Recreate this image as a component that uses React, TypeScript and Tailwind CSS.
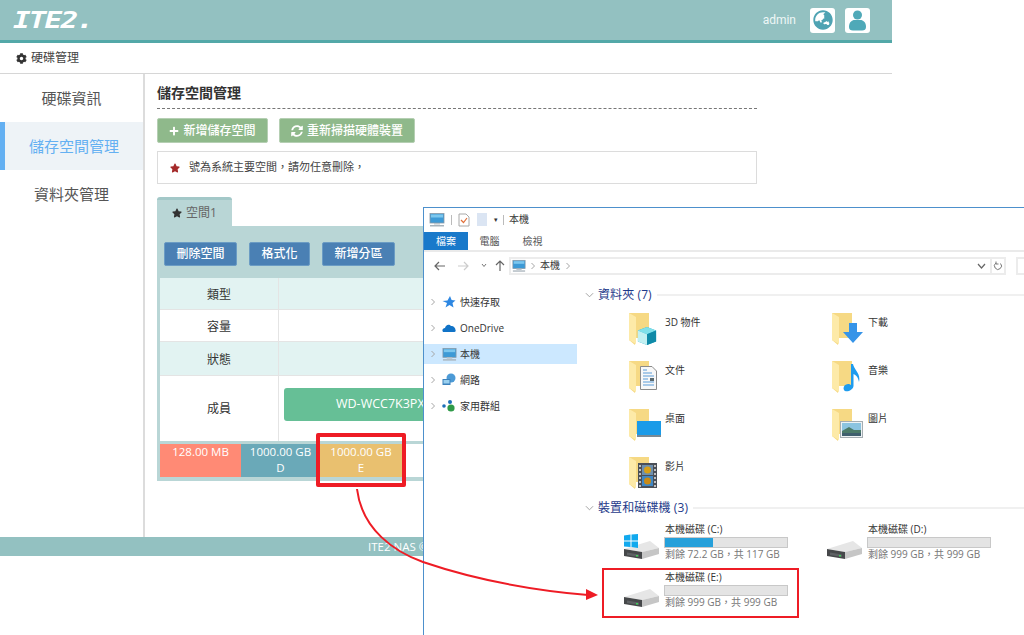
import { FaCog, FaPlus, FaSyncAlt, FaStar, FaGlobeAsia } from "react-icons/fa";
import type { ReactNode } from "react";

const cjk = "font-['Open_Sans','Noto_Sans_CJK_TC',sans-serif]";

const sideItems = [
  { name: "硬碟資訊", active: false },
  { name: "儲存空間管理", active: true },
  { name: "資料夾管理", active: false },
];

const rows = [
  { name: "類型", h: "h-[32px]", bg: "bg-[#e2f3f2]" },
  { name: "容量", h: "h-[32px]", bg: "bg-white" },
  { name: "狀態", h: "h-[34px]", bg: "bg-[#e2f3f2]" },
];

function BlueBtn({ label, w }: { label: string; w: string }) {
  return (
    <div className={`${w} h-[24px] flex items-center justify-center rounded-[2px] bg-[#4a80b4] border border-[#6b9cc4] text-white text-[12px] font-medium`}>
      {label}
    </div>
  );
}

function GreenBtn({ icon, label, w }: { icon: ReactNode; label: string; w: string }) {
  return (
    <div className={`${w} h-[25px] flex items-center justify-center gap-[4px] rounded-[2px] bg-[#8fb98b] border border-[#b5cfb3] text-white text-[12px] font-medium`}>
      {icon}
      {label}
    </div>
  );
}

function PcIcon({ size = 16 }: { size?: number }) {
  return (
    <svg width={size} height={size} viewBox="0 0 16 16" className="shrink-0">
      <rect x="1" y="1.5" width="14" height="9.5" fill="#3d9ad6" stroke="#8a9aa6" strokeWidth="0.8" />
      <rect x="2" y="2.5" width="12" height="3" fill="#7cc7ee" />
      <rect x="5" y="11" width="6" height="1.5" fill="#b9c3ca" />
      <rect x="1" y="13" width="14" height="1.5" fill="#a8b3bb" />
    </svg>
  );
}

function Folder({ overlay }: { overlay?: ReactNode }) {
  return (
    <div className="relative w-[36px] h-[34px] shrink-0">
      <svg width="22" height="34" viewBox="0 0 22 34" className="absolute left-0 top-0">
        <path d="M0 1 H20 V26 H7 L6 33 L0 28 Z" fill="#f6d984" />
        <path d="M0 1 L7 5 V32 L0 28 Z" fill="#fdeaa8" />
      </svg>
      {overlay}
    </div>
  );
}

function DriveIcon({ win }: { win?: boolean }) {
  return (
    <svg width="35" height="26" viewBox="0 0 35 26" className="shrink-0">
      <path d="M0 15 L26 7 L35 14 L18 18 Z" fill="#e6e6e6" />
      <path d="M0 15 L18 18 V25 L0 22 Z" fill="#46484a" />
      <path d="M3 18.5 L15 20.5 V23 L3 21 Z" fill="#5e6164" />
      <path d="M18 18 L35 14 V20 L18 25 Z" fill="#c6c6c6" />
      <rect x="12" y="21" width="2" height="1.5" fill="#3ed25a" />
      {win && (
        <g fill="#11a9ee">
          <path d="M0 1.5 L6.5 0.5 V6.5 H0 Z" />
          <path d="M7.5 0.5 L14 0 V6.5 H7.5 Z" />
          <path d="M0 7.5 H6.5 V13 L0 12.5 Z" />
          <path d="M7.5 7.5 H14 V14 L7.5 13 Z" />
        </g>
      )}
    </svg>
  );
}

const folders: { name: string; overlay: ReactNode }[] = [
  {
    name: "3D 物件",
    overlay: (
      <svg width="20" height="20" viewBox="0 0 22 22" className="absolute left-[8px] top-[14px]">
        <path d="M11 1 L21 5 V17 L11 21 L1 17 V5 Z" fill="#1fa9c9" />
        <path d="M11 1 L21 5 L11 9 L1 5 Z" fill="#7fe0ea" />
        <path d="M1 5 L11 9 V21 L1 17 Z" fill="#c2f0f2" />
        <path d="M11 9 L21 5 V17 L11 21 Z" fill="#0f8aa8" />
      </svg>
    ),
  },
  {
    name: "下載",
    overlay: (
      <svg width="20" height="20" viewBox="0 0 20 20" className="absolute left-[11px] top-[11px]">
        <path d="M6 0 H14 V9 H20 L10 20 L0 9 H6 Z" fill="#3694e8" />
      </svg>
    ),
  },
  {
    name: "文件",
    overlay: (
      <svg width="17" height="24" viewBox="0 0 17 24" className="absolute left-[11px] top-[6px]">
        <path d="M0.5 0.5 H12 L16.5 5 V23.5 H0.5 Z" fill="#f8f8f8" stroke="#8b8b8b" />
        <path d="M3 4 H7 M3 7 H12 M3 10 H14 M3 13 H8 M3 16 H14 M3 19 H14" stroke="#5a9bd8" strokeWidth="1.2" />
        <rect x="10" y="12" width="4" height="3" fill="#5c6a70" />
      </svg>
    ),
  },
  {
    name: "音樂",
    overlay: (
      <svg width="18" height="28" viewBox="0 0 18 28" className="absolute left-[11px] top-[4px]">
        <path d="M8 0 H10 C11 6 18 9 16 18 C15 13 13 11 10.5 10 V22 C10 26 5 28 2 27 C-1 25 1 20 5 20 C6 20 7.5 20.5 8 21 Z" fill="#1e9cee" />
      </svg>
    ),
  },
  {
    name: "桌面",
    overlay: (
      <svg width="24" height="17" viewBox="0 0 24 17" className="absolute left-[8px] top-[13px]">
        <rect x="0" y="0" width="24" height="14" fill="#1b9be8" />
        <rect x="0" y="14" width="24" height="2" fill="#7a8a94" />
      </svg>
    ),
  },
  {
    name: "圖片",
    overlay: (
      <svg width="23" height="17" viewBox="0 0 23 17" className="absolute left-[8px] top-[13px]">
        <rect x="0.5" y="0.5" width="22" height="16" fill="#eef2f4" stroke="#a5adb2" />
        <rect x="2" y="2" width="19" height="13" fill="#8cc4e0" />
        <path d="M2 10 L9 6 L14 9 L21 9 V15 H2 Z" fill="#4b7a68" />
        <rect x="2" y="12" width="19" height="3" fill="#3f5f6e" />
      </svg>
    ),
  },
  {
    name: "影片",
    overlay: (
      <svg width="19" height="25" viewBox="0 0 19 25" className="absolute left-[9px] top-[7px]">
        <rect x="0" y="0" width="19" height="25" fill="#4a4f57" />
        <rect x="4" y="2" width="11" height="10" fill="#6d8fae" />
        <rect x="4" y="13" width="11" height="10" fill="#3f87c4" />
        <circle cx="9.5" cy="7" r="3.5" fill="#d8a018" />
        <circle cx="9.5" cy="18" r="3.5" fill="#c98a16" />
        <path d="M1 3 H3 M1 7 H3 M1 11 H3 M1 15 H3 M1 19 H3 M1 23 H3 M16 3 H18 M16 7 H18 M16 11 H18 M16 15 H18 M16 19 H18 M16 23 H18" stroke="#e8e8e8" strokeWidth="1.4" />
      </svg>
    ),
  },
];

const navItems: { name: string; icon: ReactNode; sel?: boolean }[] = [
  {
    name: "快速存取",
    icon: (
      <svg width="14" height="14" viewBox="0 0 14 14">
        <path d="M8 1 L9.6 5 L13.5 5.4 L10.5 8 L11.5 12.5 L7.5 10 L3.5 12.5 L5 8 L0.5 6 L5.5 5.5 Z" fill="#2d87e2" />
      </svg>
    ),
  },
  {
    name: "OneDrive",
    icon: (
      <svg width="14" height="14" viewBox="0 0 14 14">
        <path d="M1 11 C-0.5 9 1 7 3 7 C3.5 4 7 2.5 9 5 C11 4.5 13.5 6.5 13.5 9 C14 10 13.5 11 12.5 11 Z" fill="#1173c7" />
      </svg>
    ),
  },
  { name: "本機", icon: <PcIcon size={15} />, sel: true },
  {
    name: "網路",
    icon: (
      <svg width="14" height="14" viewBox="0 0 14 14">
        <circle cx="9" cy="5" r="4.5" fill="#4c9ad6" />
        <rect x="0.5" y="6" width="8" height="6" fill="#3c82bc" />
        <rect x="1.5" y="7" width="6" height="3.5" fill="#9ad0ef" />
      </svg>
    ),
  },
  {
    name: "家用群組",
    icon: (
      <svg width="14" height="14" viewBox="0 0 14 14">
        <circle cx="2" cy="7" r="1.8" fill="#1d6fb8" />
        <circle cx="8" cy="3" r="2" fill="#1d6fb8" />
        <circle cx="9" cy="9" r="3.6" fill="#2f9a48" />
      </svg>
    ),
  },
];

const drives = [
  { name: "本機磁碟 (C:)", free: "剩餘 72.2 GB，共 117 GB", pct: "w-[48px]", win: true },
  { name: "本機磁碟 (D:)", free: "剩餘 999 GB，共 999 GB", pct: "w-0", win: false },
  { name: "本機磁碟 (E:)", free: "剩餘 999 GB，共 999 GB", pct: "w-0", win: false },
];

function Chevron() {
  return (
    <svg width="6" height="8" viewBox="0 0 6 8" className="shrink-0">
      <path d="M1.5 1 L4.5 4 L1.5 7" fill="none" stroke="#a6a6a6" strokeWidth="1" />
    </svg>
  );
}

function GroupHead({ label }: { label: string }) {
  return (
    <div className="flex items-center h-[16px]">
      <svg width="9" height="6" viewBox="0 0 10 6" className="mr-[4px] shrink-0">
        <path d="M1 1 L5 5 L9 1" fill="none" stroke="#9a9a9a" strokeWidth="1" />
      </svg>
      <span className="text-[12px] text-[#1e3a8a] tracking-[0.1px] whitespace-nowrap">{label}</span>
      <div className="flex-1 h-[2px] bg-[#f0f0f0] ml-[5px]" />
    </div>
  );
}

function ExplorerWindow() {
  return (
    <div className={`absolute left-[423px] top-[207px] w-[680px] h-[428px] bg-white border-l border-t border-[#4d90cc] flex flex-col overflow-hidden ${cjk}`}>
      <div className="h-[24px] flex items-center pl-[5px] pb-[1px] shrink-0 text-[10px] text-[#333]">
        <PcIcon size={16} />
        <div className="w-px h-[10px] bg-[#bbb] mx-[6px]" />
        <svg width="12" height="14" viewBox="0 0 12 14">
          <path d="M1 1 H8 L11 4 V13 H1 Z" fill="#fff" stroke="#a8a8a8" />
          <path d="M3 7 L5.5 9.5 L9 5" fill="none" stroke="#e2703a" strokeWidth="1.2" />
        </svg>
        <div className="w-[10px] h-[13px] bg-[#dbe5f3] ml-[7px]" />
        <span className="ml-[7px] text-[7px] leading-none text-[#333]">▾</span>
        <div className="w-px h-[10px] bg-[#bbb] mx-[5px]" />
        <span>本機</span>
      </div>
      <div className="h-[20px] flex items-center shrink-0 text-[10px] border-b-2 border-[#eaeaea]">
        <div className="w-[44px] h-[18px] flex items-center justify-center bg-[#1979ca] text-white self-start">檔案</div>
        <div className="w-[43px] text-center text-[#555]">電腦</div>
        <div className="w-[43px] text-center text-[#555]">檢視</div>
      </div>
      <div className="h-[32px] flex items-center pb-[5px] shrink-0 text-[#666]">
        <svg width="12" height="10" viewBox="0 0 12 10" className="ml-[10px]">
          <path d="M5 1 L1 5 L5 9 M1 5 H11" fill="none" stroke="#666" strokeWidth="1.2" />
        </svg>
        <svg width="12" height="10" viewBox="0 0 12 10" className="ml-[11px]">
          <path d="M7 1 L11 5 L7 9 M11 5 H1" fill="none" stroke="#ccc" strokeWidth="1.2" />
        </svg>
        <svg width="6" height="5" viewBox="0 0 6 5" className="ml-[12px]">
          <path d="M1 1 L3 3.5 L5 1" fill="none" stroke="#777" strokeWidth="1" />
        </svg>
        <svg width="10" height="11" viewBox="0 0 10 11" className="ml-[8px]">
          <path d="M1 5 L5 1 L9 5 M5 1 V11" fill="none" stroke="#666" strokeWidth="1.2" />
        </svg>
        <div className="ml-[4px] w-[497px] h-[18px] shrink-0 border-2 border-[#ececec] flex items-center pl-[1px] text-[10px] text-[#333]">
          <PcIcon size={14} />
          <span className="mx-[4px]"><Chevron /></span>
          <span>本機</span>
          <span className="ml-[5px]"><Chevron /></span>
          <svg width="9" height="6" viewBox="0 0 9 6" className="ml-auto mr-[4px]">
            <path d="M1 1 L4.5 5 L8 1" fill="none" stroke="#666" strokeWidth="1.2" />
          </svg>
          <div className="w-[14px] h-full border-l-2 border-[#ececec] flex items-center justify-center">
            <svg width="10" height="10" viewBox="0 0 10 10">
              <path d="M7.5 2.5 A3.5 3.5 0 1 1 3 2 M3 0.5 V3 H5.5" fill="none" stroke="#777" strokeWidth="1" />
            </svg>
          </div>
        </div>
        <div className="ml-[10px] w-[60px] h-[18px] shrink-0 border-2 border-[#ececec]" />
      </div>
      <div className="flex-1 flex min-h-0">
        <div className="w-[153px] shrink-0 pt-[8px] text-[10px] text-[#333]">
          {navItems.map((item) => (
            <div key={item.name} className={`h-[20px] mb-[6px] flex items-center pl-[6px] ${item.sel ? "bg-[#cce8ff]" : ""}`}>
              <Chevron />
              <div className="w-[14px] ml-[6px] flex justify-center">{item.icon}</div>
              <span className="ml-[4px] whitespace-nowrap">{item.name}</span>
            </div>
          ))}
        </div>
        <div className="flex-1 pl-[8px] pt-[3px]">
          <GroupHead label="資料夾 (7)" />
          <div className="grid grid-cols-[203px_203px] auto-rows-[48px] pl-[44px] mt-[9px] text-[10px] text-[#333]">
            {folders.map((f) => (
              <div key={f.name} className="flex">
                <Folder overlay={f.overlay} />
                <span className="whitespace-nowrap pt-[3px]">{f.name}</span>
              </div>
            ))}
          </div>
          <div className="mt-[-4px]">
            <GroupHead label="裝置和磁碟機 (3)" />
          </div>
          <div className="grid grid-cols-[203px_203px] auto-rows-[48px] pl-[39px] mt-[7px] text-[10px]">
            {drives.map((d) => (
              <div key={d.name} className="flex items-start">
                <div className="w-[40px] pt-[11px]"><DriveIcon win={d.win} /></div>
                <div className="w-[124px] leading-[12px]">
                  <div className="text-[#333] pl-[1px] whitespace-nowrap">{d.name}</div>
                  <div className="h-[11px] mt-[2px] bg-[#e4e4e4] border border-[#c8c8c8]">
                    <div className={`h-full ${d.pct} bg-[#26a0da]`} />
                  </div>
                  <div className="text-[#777] pl-[1px] whitespace-nowrap">{d.free}</div>
                </div>
              </div>
            ))}
          </div>
        </div>
      </div>
    </div>
  );
}

export default function App() {
  return (
    <div className={`relative w-[1024px] h-[635px] overflow-hidden bg-white ${cjk}`}>
      <div className="w-[892px] flex flex-col">
        <div className="h-[43px] bg-[#93c1c1] border-b-[3px] border-[#53a8a8] flex items-center pl-[13px] pr-[22px]">
          <span className="font-['DejaVu_Sans_Mono',monospace] italic font-bold text-[23px] tracking-[-1.5px] text-white origin-left scale-x-[1.28]">ITE2.</span>
          <span className="ml-auto text-[12px] text-[#eef7f7] font-['Roboto',sans-serif]">admin</span>
          <div className="ml-[14px] w-[25px] h-[25px] rounded-[3px] bg-white flex items-center justify-center">
            <FaGlobeAsia className="text-[20px] text-[#4fa3b3]" />
          </div>
          <div className="ml-[10px] w-[25px] h-[25px] rounded-[3px] bg-white flex items-center justify-center">
            <svg width="17" height="21" viewBox="0 0 17 21">
              <circle cx="8.5" cy="5" r="4.5" fill="#4fa9b8" />
              <path d="M0 17 C0 12 3 10 5.5 10 H11.5 C14 10 17 12 17 17 C17 19.5 15.5 20.5 13 20.5 H4 C1.5 20.5 0 19.5 0 17 Z" fill="#4fa9b8" />
            </svg>
          </div>
        </div>
        <div className="h-[31px] border-b border-[#d6d6d6] flex items-center pl-[16px] gap-[4px] text-[12px] text-[#444]">
          <FaCog className="text-[11px] text-[#333]" />
          硬碟管理
        </div>
        <div className="flex h-[463px]">
          <div className="w-[145px] shrink-0 border-r-2 border-[#dcdcdc] text-[15px] text-[#555]">
            {sideItems.map((s) => (
              <div
                key={s.name}
                className={`h-[48px] flex items-center justify-center ${s.active ? "bg-[#eef3f7] border-l-[5px] border-[#64b0f2] text-[#64b0f2]" : ""}`}
              >
                {s.name}
              </div>
            ))}
          </div>
          <div className="flex-1 pl-[12px] pt-[11px] pr-[135px]">
            <div className="h-[24px] border-b border-dashed border-[#777] text-[14px] font-semibold text-[#333] leading-[16px]">儲存空間管理</div>
            <div className="flex gap-[11px] mt-[9px]">
              <GreenBtn icon={<FaPlus className="text-[10px]" />} label="新增儲存空間" w="w-[111px]" />
              <GreenBtn icon={<FaSyncAlt className="text-[12px]" />} label="重新掃描硬體裝置" w="w-[136px]" />
            </div>
            <div className="h-[33px] mt-[8px] border border-[#dcdcdc] flex items-center pl-[12px] text-[11px] text-[#444]">
              <FaStar className="text-[10px] text-[#a52a2a] mr-[9px]" />
              號為系統主要空間，請勿任意刪除，
            </div>
            <div className="mt-[13px] w-[75px] h-[29px] bg-[#b9d6d6] border-t-[3px] border-[#a3c8c8] rounded-t-[3px] flex items-center justify-center gap-[4px] text-[12px] text-[#666]">
              <FaStar className="text-[10px] text-[#333]" />
              空間1
            </div>
            <div className="bg-[#b9d6d6] p-[3px] pt-[16px] h-[255px]">
              <div className="flex gap-[12px] pl-[4px] h-[36px]">
                <BlueBtn label="刪除空間" w="w-[73px]" />
                <BlueBtn label="格式化" w="w-[61px]" />
                <BlueBtn label="新增分區" w="w-[73px]" />
              </div>
              {rows.map((r) => (
                <div key={r.name} className={`${r.h} ${r.bg} flex border-b border-[#e4e4e4] text-[12px] text-[#333]`}>
                  <div className="w-[119px] pt-[2px] flex items-center justify-center border-r border-[#e4e4e4]">{r.name}</div>
                </div>
              ))}
              <div className="h-[65px] bg-white flex text-[12px] text-[#333]">
                <div className="w-[119px] flex items-center justify-center border-r border-[#e4e4e4]">成員</div>
                <div className="flex-1 pl-[5px] pt-[12px] pr-[6px]">
                  <div className="h-[33px] rounded-[3px] bg-[#66bf96] text-white text-[12.5px] flex items-center pl-[52px]">WD-WCC7K3PX</div>
                </div>
              </div>
              <div className="mt-[3px] h-[33px] flex bg-white text-[11.5px] text-white text-center leading-[16px]">
                <div className="w-[81px] bg-[#ff8a75]">128.00 MB</div>
                <div className="w-[79px] bg-[#6aa9b8]">1000.00 GB<br />D</div>
                <div className="w-[82px] bg-[#e9c06f]">1000.00 GB<br />E</div>
              </div>
            </div>
          </div>
        </div>
        <div className="h-[19px] bg-[#93c1c1] text-white text-[11.5px] leading-[19px] pl-[368px] whitespace-nowrap">ITE2 NAS ©</div>
      </div>

      <ExplorerWindow />

      {/* red annotations on top of the screenshot */}
      <div className="absolute left-[316px] top-[433px] w-[90px] h-[54px] border-[4px] border-[#ee1c25] rounded-[2px]" />
      <div className="absolute left-[602px] top-[568px] w-[197px] h-[50px] border-2 border-[#ee1c25]" />
      <svg width="1024" height="635" viewBox="0 0 1024 635" className="absolute left-0 top-0 pointer-events-none">
        <path d="M357 489 C362 530 395 552 423 562 C470 578 530 590 588 595" fill="none" stroke="#ee1c25" strokeWidth="2" />
        <path d="M598 595 L586 589 L586 600 Z" fill="#ee1c25" />
      </svg>
    </div>
  );
}
